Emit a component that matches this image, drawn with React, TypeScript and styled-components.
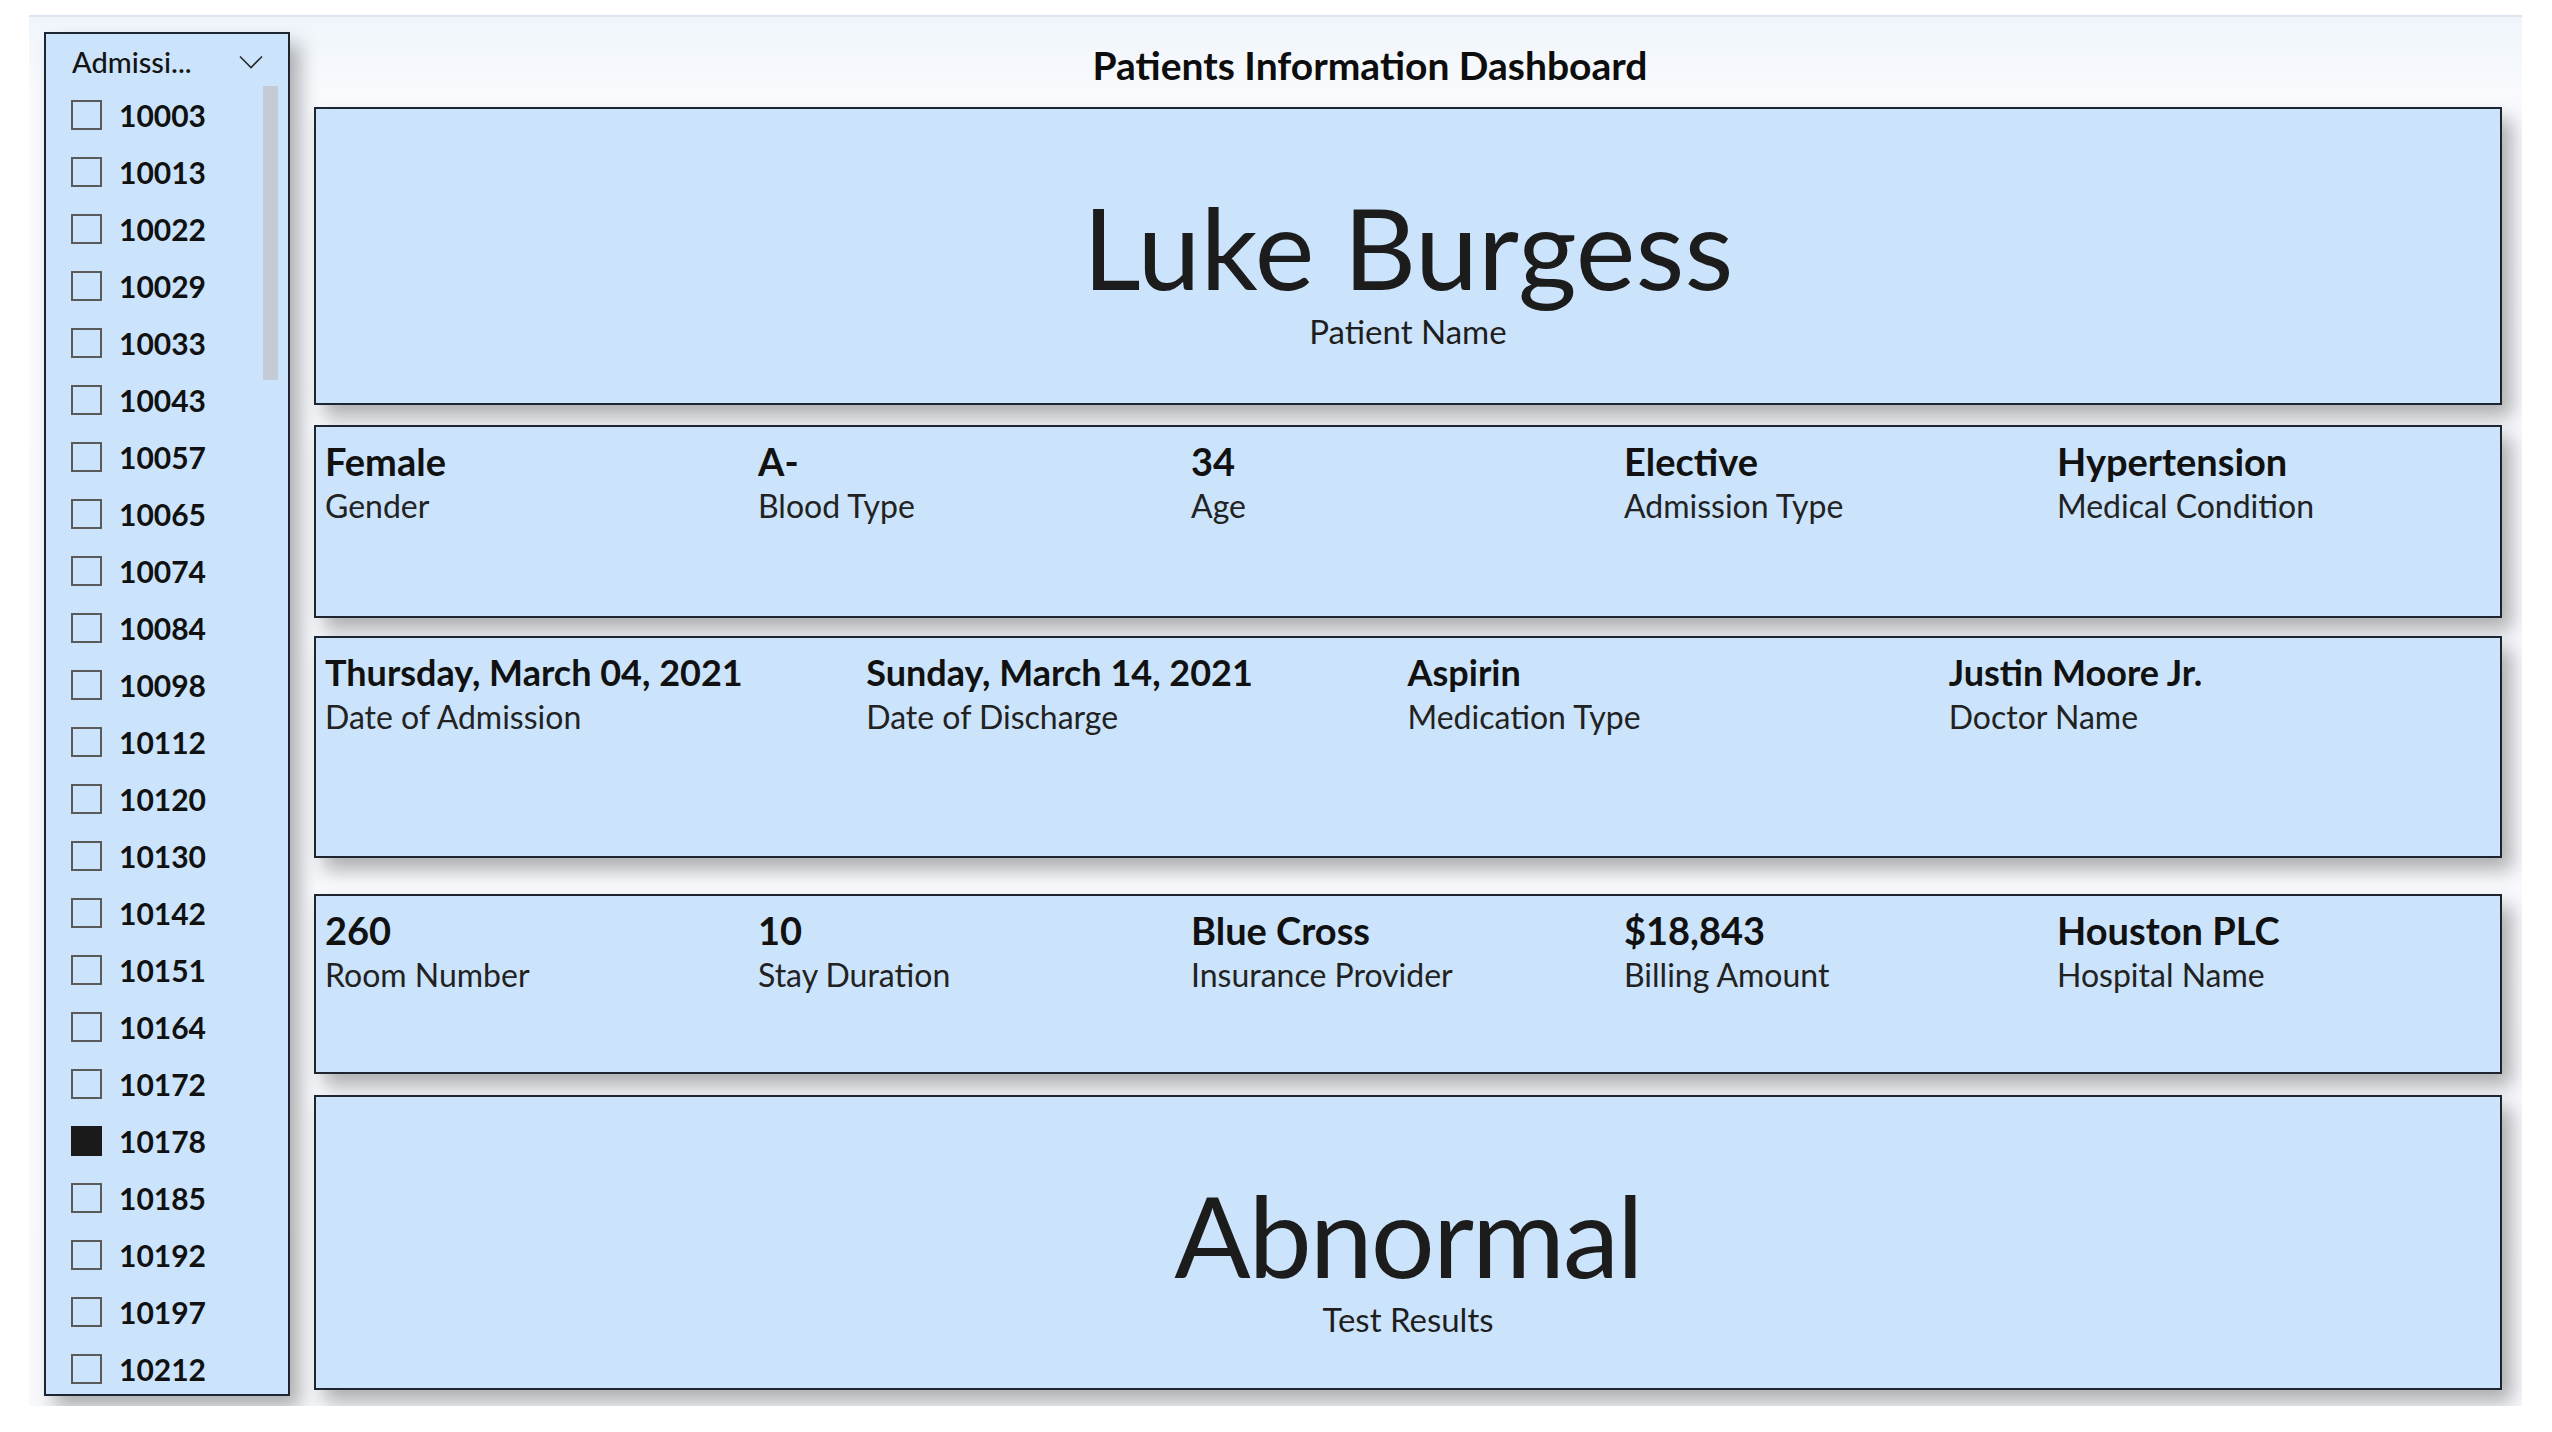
import React from "react";
import styled, { createGlobalStyle } from "styled-components";

const GlobalStyle = createGlobalStyle`
  html, body { margin: 0; padding: 0; background: #ffffff; }
  body { font-family: Lato, "Open Sans", sans-serif; color: #111111; }
  * { box-sizing: border-box; }
`;

const Page = styled.div`
  width: 2552px;
  height: 1432px;
  padding: 15px 0 0 29px;
  background: #ffffff;
`;

const Canvas = styled.div`
  width: 2493px;
  height: 1391px;
  display: flex;
  align-items: flex-start;
  overflow: hidden;
  border-top: 2px solid #dde5ee;
  background: linear-gradient(180deg, #eff5fb 0px, #f8fafd 70px, #f7f9fc 100%);
`;

const Slicer = styled.aside`
  width: 246px;
  height: 1364px;
  margin: 15px 0 0 15px;
  flex-shrink: 0;
  display: flex;
  flex-direction: column;
  overflow: hidden;
  background: #cbe4fb;
  border: 2px solid #1d2630;
  box-shadow: 10px 12px 18px rgba(0, 0, 0, 0.3);
`;

const SlicerHeader = styled.div`
  height: 52px;
  padding: 3px 25px 0 26px;
  display: flex;
  align-items: center;
  justify-content: space-between;
  flex-shrink: 0;
`;

const HeaderTitle = styled.span`
  font-size: 29px;
  font-weight: 500;
  color: #141414;
`;

const SlicerBody = styled.div`
  flex: 1;
  display: flex;
  min-height: 0;
`;

const ItemList = styled.ul`
  flex: 1;
  list-style: none;
  margin: 0;
  padding: 0;
`;

const Item = styled.li`
  height: 57px;
  display: flex;
  align-items: center;
  padding-left: 25px;
`;

const Checkbox = styled.span<{ $checked?: boolean }>`
  width: 31px;
  height: 30px;
  flex-shrink: 0;
  border: 2px solid ${(p) => (p.$checked ? "#1a1a1a" : "#5a5a5a")};
  background: ${(p) => (p.$checked ? "#1a1a1a" : "transparent")};
`;

const ItemLabel = styled.span`
  margin-left: 17px;
  font-size: 30px;
  font-weight: 700;
  color: #111111;
`;

const ScrollTrack = styled.div`
  width: 15px;
  margin-right: 10px;
  flex-shrink: 0;
`;

const ScrollThumb = styled.div`
  height: 294px;
  background: #c3ccd5;
`;

const Main = styled.main`
  width: 2188px;
  margin-left: 24px;
  flex-shrink: 0;
  display: flex;
  flex-direction: column;
`;

const TitleBar = styled.h1`
  margin: 0;
  height: 90px;
  padding: 6px 76px 0 0;
  display: flex;
  align-items: center;
  justify-content: center;
  font-size: 39px;
  font-weight: 700;
  color: #0d0d0d;
`;

const Card = styled.section<{ $h: number; $mt: number }>`
  height: ${(p) => p.$h}px;
  margin-top: ${(p) => p.$mt}px;
  background: #cbe4fb;
  border: 2px solid #1d2630;
  box-shadow: 10px 12px 18px rgba(0, 0, 0, 0.3);
  flex-shrink: 0;
`;

const HeroCard = styled(Card)`
  display: flex;
  flex-direction: column;
  align-items: center;
  padding-top: 70px;
`;

const HeroValue = styled.div<{ $track?: number }>`
  font-size: 113px;
  font-weight: 400;
  line-height: 1.2;
  letter-spacing: ${(p) => p.$track ?? 0}px;
  color: #1c1c1c;
`;

const HeroLabel = styled.div`
  margin-top: -3px;
  font-size: 33px;
  line-height: 1.2;
  color: #1e1e1e;
`;

const InfoCard = styled(Card)<{ $cols: number; $valueSize: number }>`
  display: grid;
  grid-template-columns: repeat(${(p) => p.$cols}, 1fr);
  align-content: start;
  padding: 11px 10px 0 9px;
  --value-size: ${(p) => p.$valueSize}px;
`;

const Field = styled.div`
  display: flex;
  flex-direction: column;
`;

const FieldValue = styled.div`
  height: 46px;
  display: flex;
  align-items: center;
  font-size: var(--value-size, 38px);
  font-weight: 700;
  white-space: nowrap;
  color: #111111;
`;

const FieldLabel = styled.div`
  margin-top: 3px;
  font-size: 32px;
  font-weight: 400;
  line-height: 1.2;
  color: #222222;
`;

const Chevron = () => (
  <svg width="24" height="14" viewBox="0 0 24 14" fill="none">
    <polyline points="1,1.5 12,12.5 23,1.5" stroke="#2a2a2a" strokeWidth="1.6" fill="none" />
  </svg>
);

const ids = [
  10003, 10013, 10022, 10029, 10033, 10043, 10057, 10065, 10074, 10084, 10098, 10112,
  10120, 10130, 10142, 10151, 10164, 10172, 10178, 10185, 10192, 10197, 10212,
];

type F = { value: string; label: string };

const row1: F[] = [
  { value: "Female", label: "Gender" },
  { value: "A-", label: "Blood Type" },
  { value: "34", label: "Age" },
  { value: "Elective", label: "Admission Type" },
  { value: "Hypertension", label: "Medical Condition" },
];

const row2: F[] = [
  { value: "Thursday, March 04, 2021", label: "Date of Admission" },
  { value: "Sunday, March 14, 2021", label: "Date of Discharge" },
  { value: "Aspirin", label: "Medication Type" },
  { value: "Justin Moore Jr.", label: "Doctor Name" },
];

const row3: F[] = [
  { value: "260", label: "Room Number" },
  { value: "10", label: "Stay Duration" },
  { value: "Blue Cross", label: "Insurance Provider" },
  { value: "$18,843", label: "Billing Amount" },
  { value: "Houston PLC", label: "Hospital Name" },
];

const Fields = ({ items }: { items: F[] }) => (
  <>
    {items.map((f) => (
      <Field key={f.label}>
        <FieldValue>{f.value}</FieldValue>
        <FieldLabel>{f.label}</FieldLabel>
      </Field>
    ))}
  </>
);

export default function App() {
  return (
    <>
      <GlobalStyle />
      <Page>
        <Canvas>
          <Slicer>
            <SlicerHeader>
              <HeaderTitle>Admissi...</HeaderTitle>
              <Chevron />
            </SlicerHeader>
            <SlicerBody>
              <ItemList>
                {ids.map((id) => (
                  <Item key={id}>
                    <Checkbox $checked={id === 10178} />
                    <ItemLabel>{id}</ItemLabel>
                  </Item>
                ))}
              </ItemList>
              <ScrollTrack>
                <ScrollThumb />
              </ScrollTrack>
            </SlicerBody>
          </Slicer>
          <Main>
            <TitleBar>Patients Information Dashboard</TitleBar>
            <HeroCard $h={298} $mt={0}>
              <HeroValue>Luke Burgess</HeroValue>
              <HeroLabel>Patient Name</HeroLabel>
            </HeroCard>
            <InfoCard $h={193} $mt={20} $cols={5} $valueSize={38}>
              <Fields items={row1} />
            </InfoCard>
            <InfoCard $h={222} $mt={18} $cols={4} $valueSize={36}>
              <Fields items={row2} />
            </InfoCard>
            <InfoCard $h={180} $mt={36} $cols={5} $valueSize={38}>
              <Fields items={row3} />
            </InfoCard>
            <HeroCard $h={295} $mt={21}>
              <HeroValue $track={-2}>Abnormal</HeroValue>
              <HeroLabel>Test Results</HeroLabel>
            </HeroCard>
          </Main>
        </Canvas>
      </Page>
    </>
  );
}
